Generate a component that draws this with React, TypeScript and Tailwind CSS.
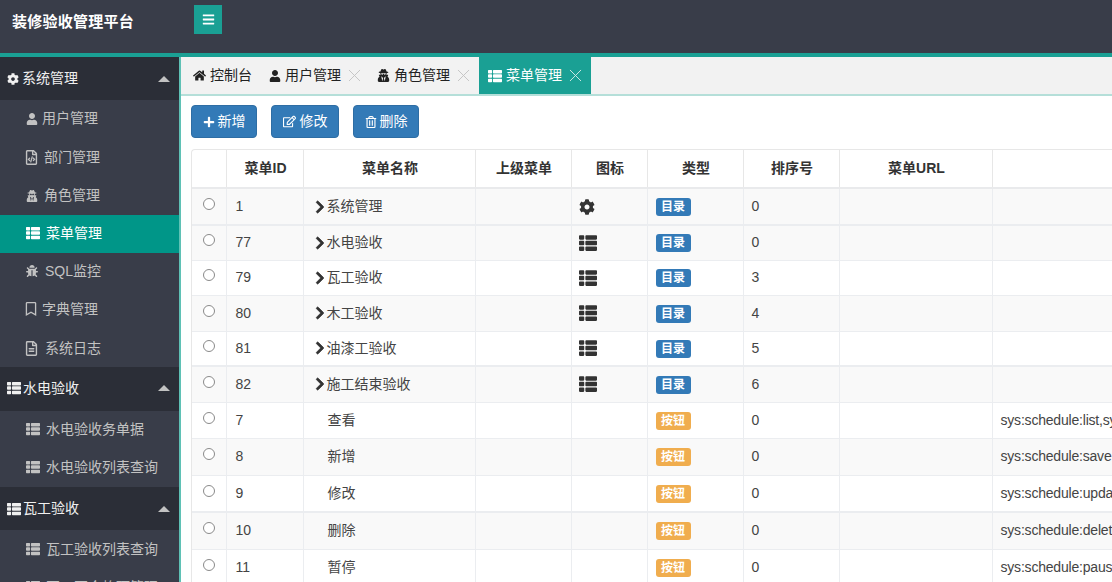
import { FaBars, FaBug, FaChevronRight, FaCog, FaHome, FaPlus, FaRegBookmark, FaRegEdit, FaRegFileAlt, FaRegFileCode, FaRegTrashAlt, FaThList, FaUser, FaUserSecret } from 'react-icons/fa'
import { X } from 'lucide-react'
import type { ReactNode } from 'react'

function Caret() {
  return (
    <svg width={12} height={6} viewBox="0 0 12 6" className="ml-auto mr-[9px]">
      <polygon points="6,0 12,6 0,6" fill="#c2c2c2" />
    </svg>
  )
}

function Group({ icon, label, h, gap }: { icon: ReactNode; label: string; h: string; gap: string }) {
  return (
    <div className={`flex items-center pl-[7px] bg-[#2b2e37] text-[#f0f0f0] ${h}`}>
      <span className="w-[15px] flex justify-start">{icon}</span>
      <span className={gap}>{label}</span>
      <Caret />
    </div>
  )
}

function Item({ icon, label, gap, active, h = 'h-[38px]' }: { icon: ReactNode; label: string; gap: string; active?: boolean; h?: string }) {
  return (
    <div className={`flex items-center pl-[26px] ${h} ${active ? 'bg-[#009688] text-white' : 'text-[#c2c2c2]'}`}>
      {icon}
      <span className={gap}>{label}</span>
    </div>
  )
}

function Tab({ icon, label, close, active, w }: { icon: ReactNode; label: string; close?: boolean; active?: boolean; w: string }) {
  return (
    <div className={`flex items-center h-[37px] ${w} ${active ? 'bg-[#1aa094] text-white' : 'text-[#222]'}`}>
      {icon}
      <span className="ml-[4px]">{label}</span>
      {close && <X size={21} strokeWidth={1.1} className={`ml-[3px] ${active ? 'text-[#cfe9e6]' : 'text-[#c4c4c4]'}`} />}
    </div>
  )
}

function ActionBtn({ icon, label, w, gap }: { icon: ReactNode; label: string; w: string; gap: string }) {
  return (
    <button className={`flex items-center justify-center h-[33px] rounded-[4px] bg-[#337ab7] border border-[#2e6da4] text-white ${w} ${gap}`}>
      {icon}
      {label}
    </button>
  )
}

const dir = (id: number, name: string, sort: number, h: string, cog?: boolean) => ({ id, name, sort, h, cog, kind: 'dir', url: '' })
const btn = (id: number, name: string, url: string, h: string) => ({ id, name, sort: 0, h, cog: false, kind: 'btn', url })

const ROWS = [
  dir(1, '系统管理', 0, 'h-[37px]', true),
  dir(77, '水电验收', 0, 'h-[35px]'),
  dir(79, '瓦工验收', 3, 'h-[35px]'),
  dir(80, '木工验收', 4, 'h-[36px]'),
  dir(81, '油漆工验收', 5, 'h-[35px]'),
  dir(82, '施工结束验收', 6, 'h-[36px]'),
  btn(7, '查看', 'sys:schedule:list,sys:schedule:info', 'h-[36px]'),
  btn(8, '新增', 'sys:schedule:save', 'h-[37px]'),
  btn(9, '修改', 'sys:schedule:update', 'h-[37px]'),
  btn(10, '删除', 'sys:schedule:delete', 'h-[37px]'),
  btn(11, '暂停', 'sys:schedule:pause', 'h-[37px]'),
]

const th = 'border-r border-[#e7e7e7] border-b-2 border-b-[#e9eaec] font-bold text-center p-0 pl-[2px]'
const td = 'border-r border-b border-[#ebedf0] p-0 align-middle'

export default function App() {
  return (
    <div className="h-[582px] w-[1112px] overflow-hidden flex flex-col bg-white text-[14px] font-['Liberation_Sans','Noto_Sans_CJK_SC',sans-serif]">
      <header className="h-[57px] shrink-0 bg-[#393d49] border-b-4 border-[#1aa094] flex items-start">
        <div className="w-[194px] pl-[12px] pt-[10px] text-white font-bold text-[15px] tracking-[0.25px] leading-[24px]">装修验收管理平台</div>
        <button className="mt-[5px] w-[28px] h-[29px] bg-[#1aa094] text-white flex items-center justify-center">
          <FaBars size={13} />
        </button>
      </header>
      <div className="flex-1 flex min-h-0">
        <aside className="w-[179px] shrink-0 bg-[#393d49] overflow-hidden">
          <Group icon={<FaCog size={12} />} label="系统管理" h="h-[43px]" gap="ml-0" />
          <Item icon={<FaUser size={12} />} label="用户管理" gap="ml-[4px]" h="h-[37px]" />
          <Item icon={<FaRegFileCode size={15} className="-ml-[2px]" />} label="部门管理" gap="ml-[5px]" h="h-[39px] pt-[2px]" />
          <Item icon={<FaUserSecret size={12} />} label="角色管理" gap="ml-[6px]" h="h-[39px]" />
          <Item icon={<FaThList size={14} />} label="菜单管理" gap="ml-[6px]" active h="h-[38px] pb-[2px]" />
          <Item icon={<FaBug size={12} />} label="SQL监控" gap="ml-[7px]" h="h-[38px] pb-[2px]" />
          <Item icon={<FaRegBookmark size={14} className="-ml-[2px]" />} label="字典管理" gap="ml-[4px]" h="h-[38px] pb-[2px]" />
          <Item icon={<FaRegFileAlt size={15} className="-ml-[2px]" />} label="系统日志" gap="ml-[6px]" />
          <Group icon={<FaThList size={14} />} label="水电验收" h="h-[44px] pb-[2px]" gap="ml-[1px]" />
          <Item icon={<FaThList size={14} />} label="水电验收务单据" gap="ml-[6px]" h="h-[38px] pb-[2px]" />
          <Item icon={<FaThList size={14} />} label="水电验收列表查询" gap="ml-[6px]" h="h-[38px] pb-[2px]" />
          <Group icon={<FaThList size={14} />} label="瓦工验收" h="h-[43px]" gap="ml-[1px]" />
          <Item icon={<FaThList size={14} />} label="瓦工验收列表查询" gap="ml-[6px]" />
          <Item icon={<FaThList size={14} />} label="瓦工不合格项管理" gap="ml-[6px]" />
        </aside>
        <main className="flex-1 min-w-0 border-l-2 border-[#5fc1b5] overflow-hidden">
          <nav className="h-[39px] bg-[#f2f2f2] border-b-2 border-[#b5dfd9] flex">
            <Tab icon={<FaHome size={13} />} label="控制台" w="w-[77px] pl-[12px]" />
            <Tab icon={<FaUser size={12} />} label="用户管理" close w="w-[108px] pl-[11px]" />
            <Tab icon={<FaUserSecret size={13} />} label="角色管理" close w="w-[113px] pl-[11px]" />
            <Tab icon={<FaThList size={14} />} label="菜单管理" close active w="w-[112px] pl-[9px]" />
          </nav>
          <div className="flex gap-[14px] pl-[10px] pt-[9px] pb-[11px]">
            <ActionBtn icon={<FaPlus size={12} />} label="新增" w="w-[66px]" gap="gap-[3px]" />
            <ActionBtn icon={<FaRegEdit size={13} />} label="修改" w="w-[68px]" gap="gap-[4px]" />
            <ActionBtn icon={<FaRegTrashAlt size={12} />} label="删除" w="w-[66px]" gap="gap-[3px]" />
          </div>
          <div className="ml-[10px] w-[1200px] rounded-tl-[4px] border-l border-t border-[#e7e7e7] overflow-hidden">
            <table className="table-fixed w-[1200px] border-collapse text-[#333]">
              <colgroup>
                <col className="w-[34px]" />
                <col className="w-[77px]" />
                <col className="w-[172px]" />
                <col className="w-[96px]" />
                <col className="w-[76px]" />
                <col className="w-[96px]" />
                <col className="w-[96px]" />
                <col className="w-[153px]" />
                <col />
              </colgroup>
              <thead>
                <tr className="h-[38px]">
                  {['', '菜单ID', '菜单名称', '上级菜单', '图标', '类型', '排序号', '菜单URL', ''].map((t, i) => (
                    <th key={i} className={th}>{t}</th>
                  ))}
                </tr>
              </thead>
              <tbody>
                {ROWS.map((r, i) => (
                  <tr
                    key={r.id}
                    className={`${r.h} ${i % 2 === 1 || i === 0 ? 'bg-[#f9f9f9]' : 'bg-white'} ${i === 0 || i === 4 || i === 8 ? '[&>td]:border-b-2' : ''}`}
                  >
                    <td className={td}>
                      <span className="block mx-auto mb-[5px] w-[12px] h-[12px] rounded-full border border-[#8a8a8a] bg-white" />
                    </td>
                    <td className={`${td} pl-[9px] text-[#444]`}>{r.id}</td>
                    <td className={`${td} pl-[10px] text-[#444]`}>
                      {r.kind === 'dir' ? (
                        <span className="flex items-center">
                          <FaChevronRight size={14} stroke="currentColor" strokeWidth={30} className="-ml-[1px] text-[#333]" />
                          {r.name}
                        </span>
                      ) : (
                        <span className="pl-[14px]">{r.name}</span>
                      )}
                    </td>
                    <td className={td} />
                    <td className={`${td} pl-[7px] text-[#333]`}>
                      {r.cog ? <FaCog size={16} /> : r.kind === 'dir' ? <FaThList size={18} /> : null}
                    </td>
                    <td className={`${td} pl-[8px]`}>
                      <span className={`inline-flex items-center justify-center w-[35px] h-[18px] rounded-[3px] text-white text-[12px] font-bold ${r.kind === 'dir' ? 'bg-[#337ab7]' : 'bg-[#f0ad4e]'}`}>
                        {r.kind === 'dir' ? '目录' : '按钮'}
                      </span>
                    </td>
                    <td className={`${td} pl-[8px] text-[#444]`}>{r.sort}</td>
                    <td className={td} />
                    <td className={`${td} pl-[8px] text-[#444] tracking-[-0.2px] whitespace-nowrap`}>{r.url}</td>
                  </tr>
                ))}
              </tbody>
            </table>
          </div>
        </main>
      </div>
    </div>
  )
}
